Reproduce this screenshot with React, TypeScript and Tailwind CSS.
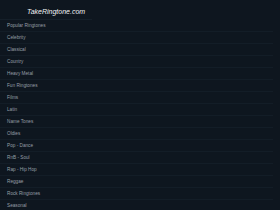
const categories = [
  'Popular Ringtones',
  'Celebrity',
  'Classical',
  'Country',
  'Heavy Metal',
  'Fun Ringtones',
  'Films',
  'Latin',
  'Name Tones',
  'Oldies',
  'Pop - Dance',
  'RnB - Soul',
  'Rap - Hip Hop',
  'Reggae',
  'Rock Ringtones',
  'Seasonal',
];

export default function App() {
  return (
    <div className="w-[280px] h-[210px] overflow-hidden bg-[#0e161f] font-['Liberation_Sans',Arial,sans-serif]">
      {/* Header */}
      <div className="w-[92px] h-[20px] border-b border-[#151f29] flex items-end pb-[4px] pl-[27px]">
        <span className="text-[7px] leading-none italic text-[#f0f2f4] whitespace-nowrap">TakeRingtone.com</span>
      </div>

      {/* Category list */}
      <ul className="w-[273px]">
        {categories.map((c) => (
          <li
            key={c}
            className="h-[12px] border-b border-[#131d27] flex items-center pl-[7px] pt-[1px] text-[4.7px] leading-none text-[#979fa7] whitespace-nowrap"
          >
            {c}
          </li>
        ))}
      </ul>
    </div>
  );
}
